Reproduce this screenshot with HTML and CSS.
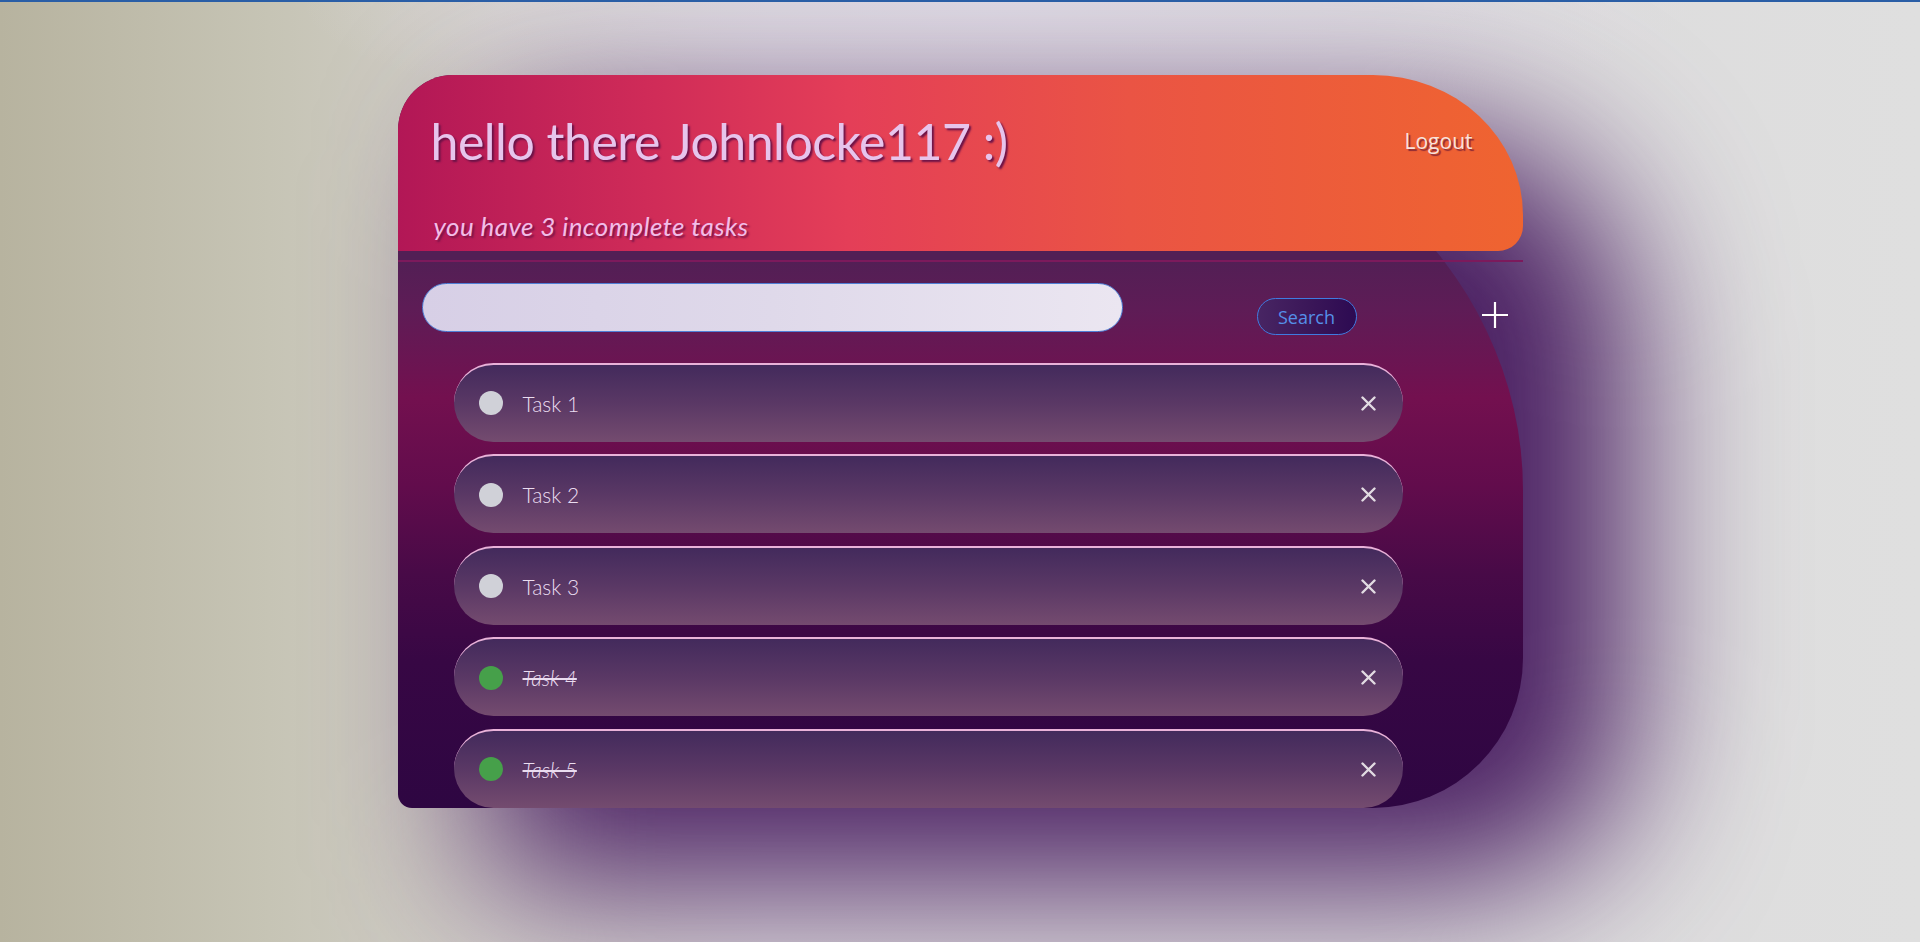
FILE: index.html
```html
<!DOCTYPE html>
<html lang="en">
<head>
<meta charset="utf-8">
<title>Todo</title>
<link rel="stylesheet" href="styles.css">
</head>
<body>
<div class="topbar"></div>
<main class="stage">
  <section class="card">
    <header class="card-head">
      <div class="head-row">
        <h1 class="title">hello there Johnlocke117 :)</h1>
        <a class="logout" href="#">Logout</a>
      </div>
      <p class="subtitle">you have 3 incomplete tasks</p>
    </header>
    <div class="divider"></div>
    <div class="toolbar">
      <input class="search-input" type="text">
      <button class="search-btn">Search</button>
      <button class="add-btn" aria-label="add">
        <svg width="26" height="26" viewBox="0 0 26 26"><path d="M13 0V26M0 13H26" stroke="#fff" stroke-width="2.2" fill="none"/></svg>
      </button>
    </div>
    <ul class="tasks">
      <li class="task"><span class="dot"></span><span class="task-text">Task 1</span><span class="del"><svg width="15" height="15" viewBox="0 0 15 15"><path d="M1.5 1.5L13.5 13.5M13.5 1.5L1.5 13.5" stroke="#e2dbe2" stroke-width="2.4" stroke-linecap="round"/></svg></span></li>
      <li class="task"><span class="dot"></span><span class="task-text">Task 2</span><span class="del"><svg width="15" height="15" viewBox="0 0 15 15"><path d="M1.5 1.5L13.5 13.5M13.5 1.5L1.5 13.5" stroke="#e2dbe2" stroke-width="2.4" stroke-linecap="round"/></svg></span></li>
      <li class="task"><span class="dot"></span><span class="task-text">Task 3</span><span class="del"><svg width="15" height="15" viewBox="0 0 15 15"><path d="M1.5 1.5L13.5 13.5M13.5 1.5L1.5 13.5" stroke="#e2dbe2" stroke-width="2.4" stroke-linecap="round"/></svg></span></li>
      <li class="task done"><span class="dot"></span><span class="task-text">Task 4</span><span class="del"><svg width="15" height="15" viewBox="0 0 15 15"><path d="M1.5 1.5L13.5 13.5M13.5 1.5L1.5 13.5" stroke="#e2dbe2" stroke-width="2.4" stroke-linecap="round"/></svg></span></li>
      <li class="task done"><span class="dot"></span><span class="task-text">Task 5</span><span class="del"><svg width="15" height="15" viewBox="0 0 15 15"><path d="M1.5 1.5L13.5 13.5M13.5 1.5L1.5 13.5" stroke="#e2dbe2" stroke-width="2.4" stroke-linecap="round"/></svg></span></li>
    </ul>
  </section>
</main>
</body>
</html>
```
FILE: styles.css
```css
* { box-sizing: border-box; }
html, body { margin: 0; height: 100%; }
body {
  overflow: hidden;
  font-family: "Lato", "Open Sans", sans-serif;
  background:
    radial-gradient(ellipse 700px 140px at 52% 0%, rgba(226,222,232,0.9), rgba(226,222,232,0) 100%),
    linear-gradient(90deg, #b7b39f 0%, #c6c4b5 14%, #d3d0cb 26%, #dad7da 40%, #dcdbdc 70%, #dfdfdf 100%);
}
.topbar { height: 2px; background: #2a5ea6; }
.stage { padding-top: 73px; }
.card {
  position: relative;
  width: 1125px;
  height: 733px;
  margin: 0 auto;
  border-radius: 55px 476px 150px 14px / 55px 415px 150px 14px;
  background: linear-gradient(180deg, #521f55 0%, #521f55 25%, #5e1c56 32%, #73104f 44%, #620c4c 56%, #480a47 68%, #370744 80%, #2e0642 100%);
}
.card::before {
  content: "";
  position: absolute;
  inset: -10px;
  z-index: -1;
  border-radius: 60px 200px 160px 30px;
  background: #4a1f62;
  transform: translate(95px, 65px);
  filter: blur(78px);
}
.card-head {
  height: 176px;
  padding: 31px 50px 0 33px;
  border-radius: 55px 150px 25px 0 / 55px 140px 25px 0;
  background: linear-gradient(90deg, #b21756 0%, #cf2b58 22%, #e43e58 40%, #ea5444 65%, #ef6430 100%);
}
.head-row { display: flex; justify-content: space-between; align-items: center; }
.title {
  margin: 0;
  font-weight: 400;
  font-size: 50px;
  line-height: 70px;
  color: #e7c4ec;
  text-shadow: 2px 2px 2px #6b1247;
  letter-spacing: -0.5px;
}
.logout {
  font-family: "Open Sans", "Noto Sans", sans-serif;
  font-size: 21px;
  color: #f8e2dc;
  text-decoration: none;
  text-shadow: 2px 2px 1px #8c2a35;
  margin-top: 0;
}
.subtitle {
  margin: 35px 0 0 3px;
  font-style: italic;
  font-weight: 400;
  font-size: 26px;
  line-height: 30px;
  color: #f2bde8;
  text-shadow: 2px 2px 2px #7a1448;
  letter-spacing: 0.4px;
}
.divider { height: 2px; margin-top: 9px; background: #7c1a5c; }
.toolbar {
  display: flex;
  align-items: flex-start;
  padding: 21px 0 0 24px;
}
.search-input {
  width: 701px;
  height: 49px;
  border-radius: 25px;
  border: 1px solid #4f7fd6;
  background: linear-gradient(90deg, #d7cfe6 0%, #dfd9ea 50%, #ebe6f1 100%);
  outline: none;
}
.search-btn {
  margin: 15px 0 0 134px;
  width: 100px;
  height: 37px;
  border-radius: 19px;
  border: 1px solid #3f7be0;
  background: linear-gradient(90deg, #482563 0%, #3a1658 55%, #2d0a52 100%);
  color: #5590e8;
  font-family: "Open Sans", "Noto Sans", sans-serif;
  font-size: 18px;
  padding: 0;
}
.add-btn {
  margin: 19px 0 0 125px;
  padding: 0;
  width: 26px;
  height: 26px;
  border: 0;
  background: none;
  filter: drop-shadow(1px 1px 0 rgba(90,40,90,0.6));
}
.add-btn svg { display: block; }
.tasks {
  list-style: none;
  margin: 27.5px 0 0 56px;
  padding: 0;
  width: 949px;
  display: flex;
  flex-direction: column;
  gap: 12.5px;
}
.task {
  height: 79px;
  border-radius: 40px;
  border-top: 2px solid #e9b2d9;
  background: linear-gradient(180deg, #432a5c 0%, #5a3865 50%, #744b6f 100%);
  display: flex;
  align-items: center;
  padding: 0 25px 0 25px;
}
.dot {
  width: 24px;
  height: 24px;
  border-radius: 50%;
  background: #d0d1d8;
  flex: none;
}
.task-text {
  margin-left: 20px;
  font-weight: 300;
  font-size: 21px;
  color: #eadcf0;
  flex: 1;
}
.done .dot { background: #46a04a; }
.done .task-text { font-style: italic; text-decoration: line-through; }
.del { width: 15px; height: 15px; margin-right: 2px; }
.del svg { display: block; }
```
